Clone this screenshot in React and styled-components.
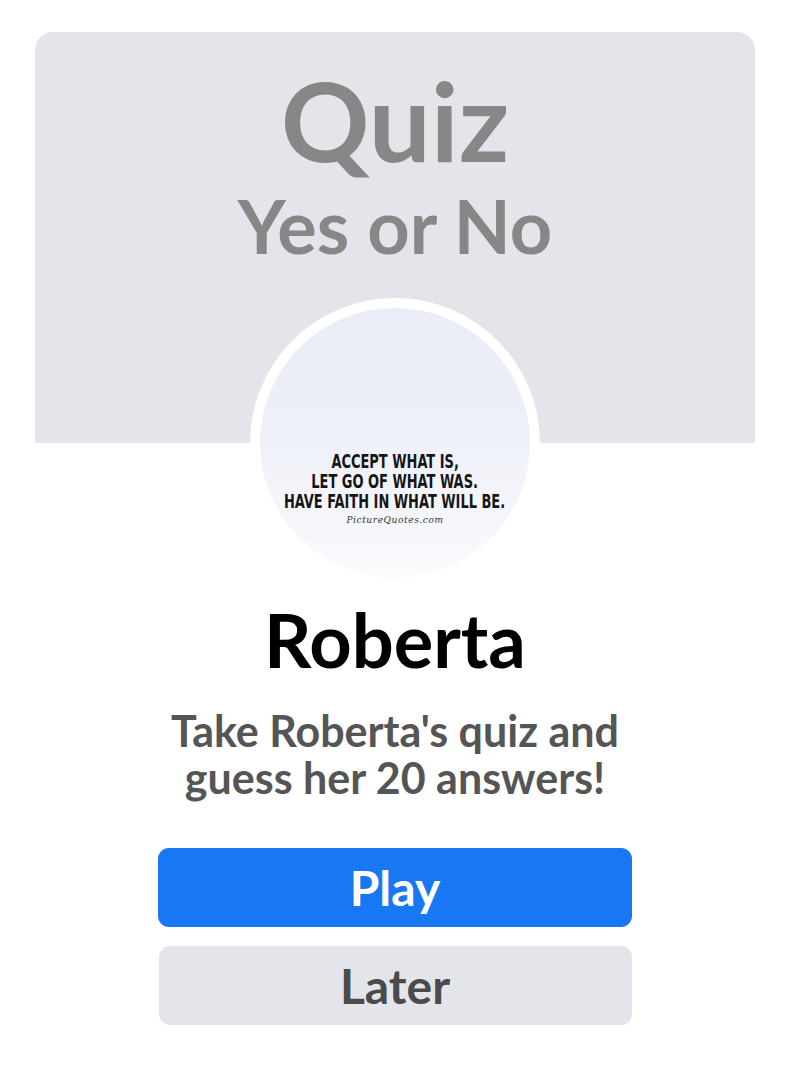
import React from "react";
import styled, { createGlobalStyle } from "styled-components";

const Global = createGlobalStyle`
  html, body {
    margin: 0;
    padding: 0;
    background: #ffffff;
  }
  body {
    font-family: Lato, "Open Sans", sans-serif;
  }
`;

const Page = styled.div`
  width: 790px;
  padding: 32px 35px 0;
  box-sizing: border-box;
  display: flex;
  flex-direction: column;
  align-items: center;
`;

const Header = styled.div`
  width: 720px;
  height: 411px;
  background: #e4e5ea;
  border-radius: 18px 18px 0 0;
  display: flex;
  flex-direction: column;
  align-items: center;
  padding-top: 28px;
  box-sizing: border-box;
`;

const Title = styled.div`
  font-size: ${(p) => p.size}px;
  line-height: ${(p) => p.lh}px;
  margin-top: ${(p) => p.mt || 0}px;
  font-weight: 700;
  color: #878787;
`;

const Avatar = styled.div`
  margin-top: -145px;
  width: 290px;
  height: 290px;
  border-radius: 50%;
  background: #ffffff;
  padding: 10px;
  box-sizing: border-box;
`;

const Quote = styled.div`
  width: 100%;
  height: 100%;
  border-radius: 50%;
  background: linear-gradient(180deg, #eaedf7 0%, #eef0f8 45%, #f6f7fb 80%, #fbfbfd 100%);
  display: flex;
  flex-direction: column;
  align-items: center;
  padding-top: 144px;
  box-sizing: border-box;
`;

const QuoteLine = styled.div`
  font-family: "DejaVu Sans Condensed", "DejaVu Sans", sans-serif;
  font-weight: 700;
  font-size: 19.5px;
  line-height: 20px;
  color: #161616;
  transform: scaleX(0.74);
  white-space: nowrap;
`;

const Credit = styled.div`
  margin-top: 3px;
  font-family: "DejaVu Serif", serif;
  font-style: italic;
  font-size: 9px;
  letter-spacing: 0.6px;
  color: #333;
`;

const Name = styled.h1`
  margin: 7px 0 0;
  font-size: 74px;
  line-height: 90px;
  font-weight: 700;
  color: #000;
`;

const Subtitle = styled.p`
  margin: 22px 0 0;
  font-size: 43px;
  line-height: 47px;
  font-weight: 700;
  color: #555555;
  text-align: center;
`;

const Button = styled.button`
  width: ${(p) => p.w}px;
  height: 79px;
  border: none;
  border-radius: 11px;
  background: ${(p) => (p.$primary ? "#1877f2" : "#e4e5ea")};
  color: ${(p) => (p.$primary ? "#ffffff" : "#4b4b4b")};
  font-family: Lato, "Open Sans", sans-serif;
  font-weight: 700;
  font-size: 48px;
  display: flex;
  align-items: center;
  justify-content: center;
  margin-top: ${(p) => p.mt}px;
  cursor: pointer;
`;

export default function App() {
  return (
    <>
      <Global />
      <Page>
        <Header>
          <Title size={110} lh={118}>Quiz</Title>
          <Title size={74} lh={80} mt={8}>Yes or No</Title>
        </Header>
        <Avatar>
          <Quote>
            <QuoteLine>ACCEPT WHAT IS,</QuoteLine>
            <QuoteLine>LET GO OF WHAT WAS.</QuoteLine>
            <QuoteLine>HAVE FAITH IN WHAT WILL BE.</QuoteLine>
            <Credit>PictureQuotes.com</Credit>
          </Quote>
        </Avatar>
        <Name>Roberta</Name>
        <Subtitle>
          Take Roberta's quiz and
          <br />
          guess her 20 answers!
        </Subtitle>
        <Button $primary w={474} mt={47}>Play</Button>
        <Button w={473} mt={19}>Later</Button>
      </Page>
    </>
  );
}
